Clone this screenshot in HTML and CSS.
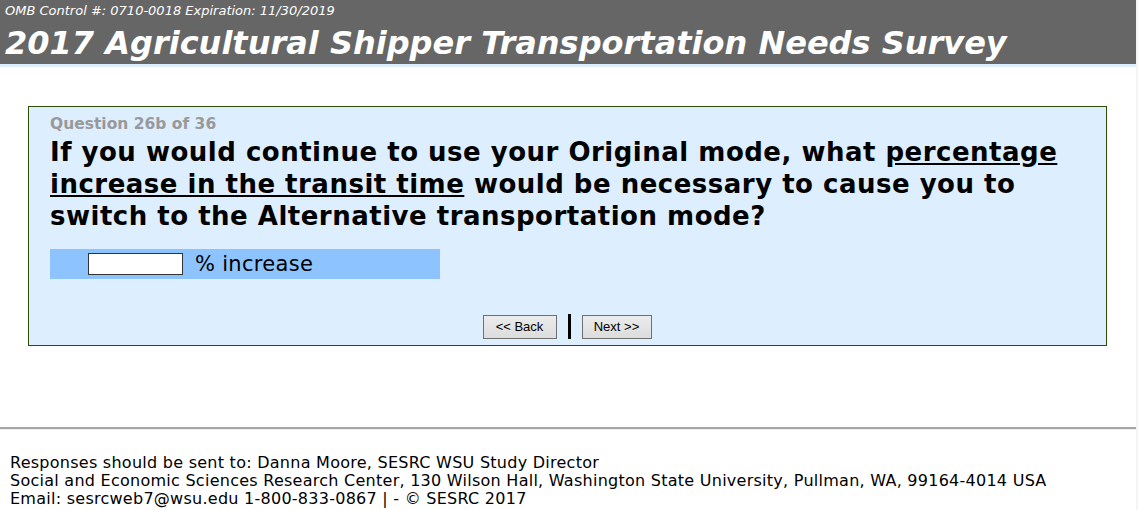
FILE: index.html
```html
<!DOCTYPE html>
<html lang="en">
<head>
    <meta charset="UTF-8">
    <meta name="viewport" content="width=device-width, initial-scale=1.0">
    <title>2017 Agricultural Shipper Transportation Needs Survey</title>
    <link rel="stylesheet" href="styles.css">
</head>
<body>
    <div class="page">
        <div class="header">
            <div class="omb">OMB Control #: 0710-0018 Expiration: 11/30/2019</div>
            <h1>2017 Agricultural Shipper Transportation Needs Survey</h1>
        </div>

        <div class="main">
            <form class="question-box">
                <div class="question-num">Question 26b of 36</div>
                <div class="question-text">If you would continue to use your Original mode, what <u>percentage increase in the transit time</u> would be necessary to cause you to switch to the Alternative transportation mode?</div>
                <div class="answer-row">
                    <input type="text" class="answer-input">
                    <span class="answer-label">% increase</span>
                </div>
                <div class="nav">
                    <button type="button">&lt;&lt; Back</button>
                    <span class="nav-sep"></span>
                    <button type="button">Next &gt;&gt;</button>
                </div>
            </form>
        </div>

        <div class="footer">
            Responses should be sent to: Danna Moore, SESRC WSU Study Director<br>
            Social and Economic Sciences Research Center, 130 Wilson Hall, Washington State University, Pullman, WA, 99164-4014 USA<br>
            Email: sesrcweb7@wsu.edu 1-800-833-0867 | - &copy; SESRC 2017
        </div>
    </div>
</body>
</html>
```

FILE: styles.css
```css
html {
    background-color: #f4f4f4;
}

body {
    margin: 0;
    padding: 0;
    font-family: "DejaVu Sans", Verdana, sans-serif;
}

.page {
    width: 1136px;
    height: 510px;
    background-color: #ffffff;
    overflow: hidden;
}

.header {
    background-color: #666666;
    color: #ffffff;
    padding: 2px 5px 0 5px;
    height: 62px;
    border-bottom: 3px solid #ddeeff;
}

.omb {
    font-size: 13px;
    font-style: italic;
    line-height: 17px;
}

h1 {
    margin: 0;
    font-size: 32px;
    font-style: italic;
    font-weight: bold;
    line-height: 48px;
}

.main {
    padding: 39px 0 0 28px;
}

.question-box {
    width: 1079px;
    border: 1px solid #2e4d05;
    background-color: #ddeeff;
    padding: 6px 0 6px 21px;
    box-sizing: border-box;
    margin: 0;
}

.question-num {
    color: #999999;
    font-weight: bold;
    font-size: 15.5px;
    line-height: 23px;
}

.question-text {
    color: #000000;
    font-weight: bold;
    font-size: 26px;
    letter-spacing: 0.5px;
    line-height: 32px;
    padding-right: 30px;
}

.answer-row {
    display: flex;
    align-items: center;
    width: 352px;
    height: 30px;
    margin-top: 17px;
    padding-left: 38px;
    background-color: #8dc4ff;
}

.answer-input {
    width: 95px;
    height: 22px;
    box-sizing: border-box;
    border: 1px solid #333333;
    margin: 0 12px 0 0;
    padding: 0;
    background: #ffffff;
}

.answer-label {
    font-size: 21px;
    letter-spacing: 0.3px;
    color: #000000;
}

.nav {
    display: flex;
    justify-content: center;
    align-items: center;
    gap: 11px;
    margin-top: 35px;
    margin-left: -22px;
}

.nav button {
    font-family: "Liberation Sans", Arial, sans-serif;
    font-size: 13px;
    color: #000000;
    height: 24px;
    padding: 0 9px;
    background: linear-gradient(#ececec, #dcdcdc);
    border: 1px solid #707070;
    border-radius: 0;
    cursor: pointer;
}

.nav button:first-child {
    width: 74px;
}

.nav button:last-child {
    width: 70px;
}

.nav-sep {
    display: block;
    width: 3px;
    height: 25px;
    background-color: #000000;
}

.footer {
    margin-top: 81px;
    border-top: 2px solid #a6a6a6;
    box-shadow: 0 1px 0 #ececec inset;
    padding: 25px 10px 0 10px;
    font-size: 16px;
    letter-spacing: 0.26px;
    line-height: 18px;
    color: #000000;
}
```
